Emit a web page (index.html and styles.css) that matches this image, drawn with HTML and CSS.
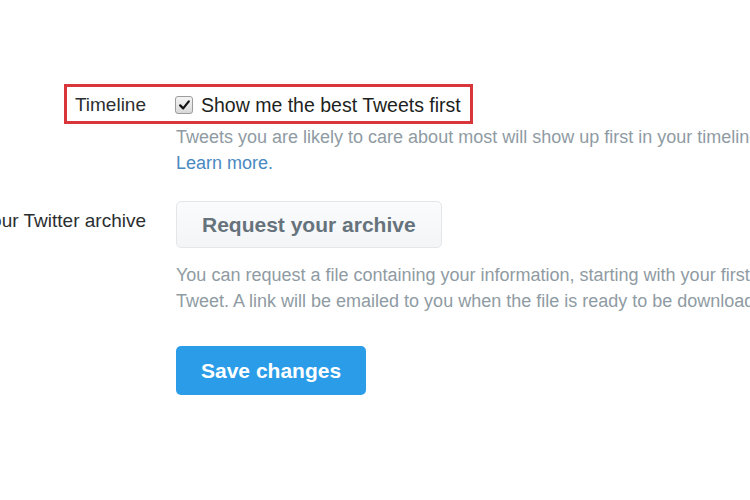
FILE: index.html
```html
<!DOCTYPE html>
<html lang="en">

<head>
    <meta charset="UTF-8">
    <meta name="viewport" content="width=device-width, initial-scale=1.0">
    <title>Account settings</title>
    <link rel="stylesheet" href="styles.css">
</head>

<body>

    <div class="settings">
        <div class="row timeline-row">
            <!-- annotation box -->
            <span class="highlight"></span>
            <div class="label">Timeline</div>
            <div class="control">
                <label class="check">
                    <span class="box">
                        <svg width="11" height="10" viewBox="0 0 11 10">
                            <path d="M1.2 5.4 L4.2 8.4 L9.8 1.4" fill="none" stroke="#111" stroke-width="2.2" stroke-linecap="round" stroke-linejoin="round"/>
                        </svg>
                    </span>
                    Show me the best Tweets first
                </label>
                <p class="note">Tweets you are likely to care about most will show up first in your timeline. <a href="#">Learn more.</a></p>
            </div>
        </div>

        <div class="row archive-row">
            <div class="label">Your Twitter archive</div>
            <div class="control">
                <button class="btn btn-light">Request your archive</button>
                <p class="note">You can request a file containing your information, starting with your first Tweet. A link will be emailed to you when the file is ready to be downloaded.</p>
            </div>
        </div>

        <div class="row save-row">
            <div class="label"></div>
            <div class="control">
                <button class="btn btn-primary">Save changes</button>
            </div>
        </div>
    </div>

</body>

</html>
```

FILE: styles.css
```css
* {
    margin: 0;
    padding: 0;
    box-sizing: border-box;
}

html,
body {
    overflow: hidden;
}

body {
    font-family: 'Liberation Sans', Arial, sans-serif;
    background-color: #fff;
    color: #292f33;
    width: 750px;
    height: 500px;
}

.settings {
    padding-top: 93px;
}

.row {
    display: flex;
    gap: 30px;
}

.label {
    flex: 0 0 146px;
    min-width: 0;
    display: flex;
    justify-content: flex-end;
    white-space: nowrap;
    font-size: 19px;
    line-height: 24px;
    color: #2b2e30;
}

.control {
    flex: 0 0 610px;
}

/* Timeline */
.timeline-row {
    position: relative;
}

.highlight {
    position: absolute;
    left: 64px;
    top: -9px;
    width: 409px;
    height: 40px;
    border: 3px solid #d8363a;
}

.check {
    display: flex;
    align-items: center;
    gap: 8px;
    font-size: 19.5px;
    line-height: 24px;
    color: #1d1f21;
    margin-left: -1px;
}

.box {
    width: 18px;
    height: 18px;
    border: 1px solid #9c9c9c;
    border-radius: 3px;
    background: linear-gradient(#f4f4f4, #d9d9d9);
    display: flex;
    align-items: center;
    justify-content: center;
}

.note {
    font-size: 18px;
    line-height: 26px;
    color: #8f9ba3;
    margin-top: 7px;
}

.note a {
    color: #4a89c2;
    text-decoration: none;
}

/* Archive */
.archive-row {
    margin-top: 25px;
}

.archive-row .label {
    padding-top: 8px;
}

.archive-row .note {
    margin-top: 14px;
}

.btn {
    font-family: 'Liberation Sans', Arial, sans-serif;
    font-weight: bold;
    line-height: 24px;
    border-radius: 5px;
    cursor: pointer;
}

.btn-light {
    font-size: 21px;
    padding: 11px 25px 10px;
    color: #66737c;
    background: linear-gradient(#fafbfc, #f3f5f7);
    border: 1px solid #e3e7ea;
}

/* Save */
.save-row {
    margin-top: 32px;
}

.btn-primary {
    font-size: 21px;
    padding: 13px 25px 12px;
    color: #fff;
    background-color: #2b9de8;
    border: none;
}
```
